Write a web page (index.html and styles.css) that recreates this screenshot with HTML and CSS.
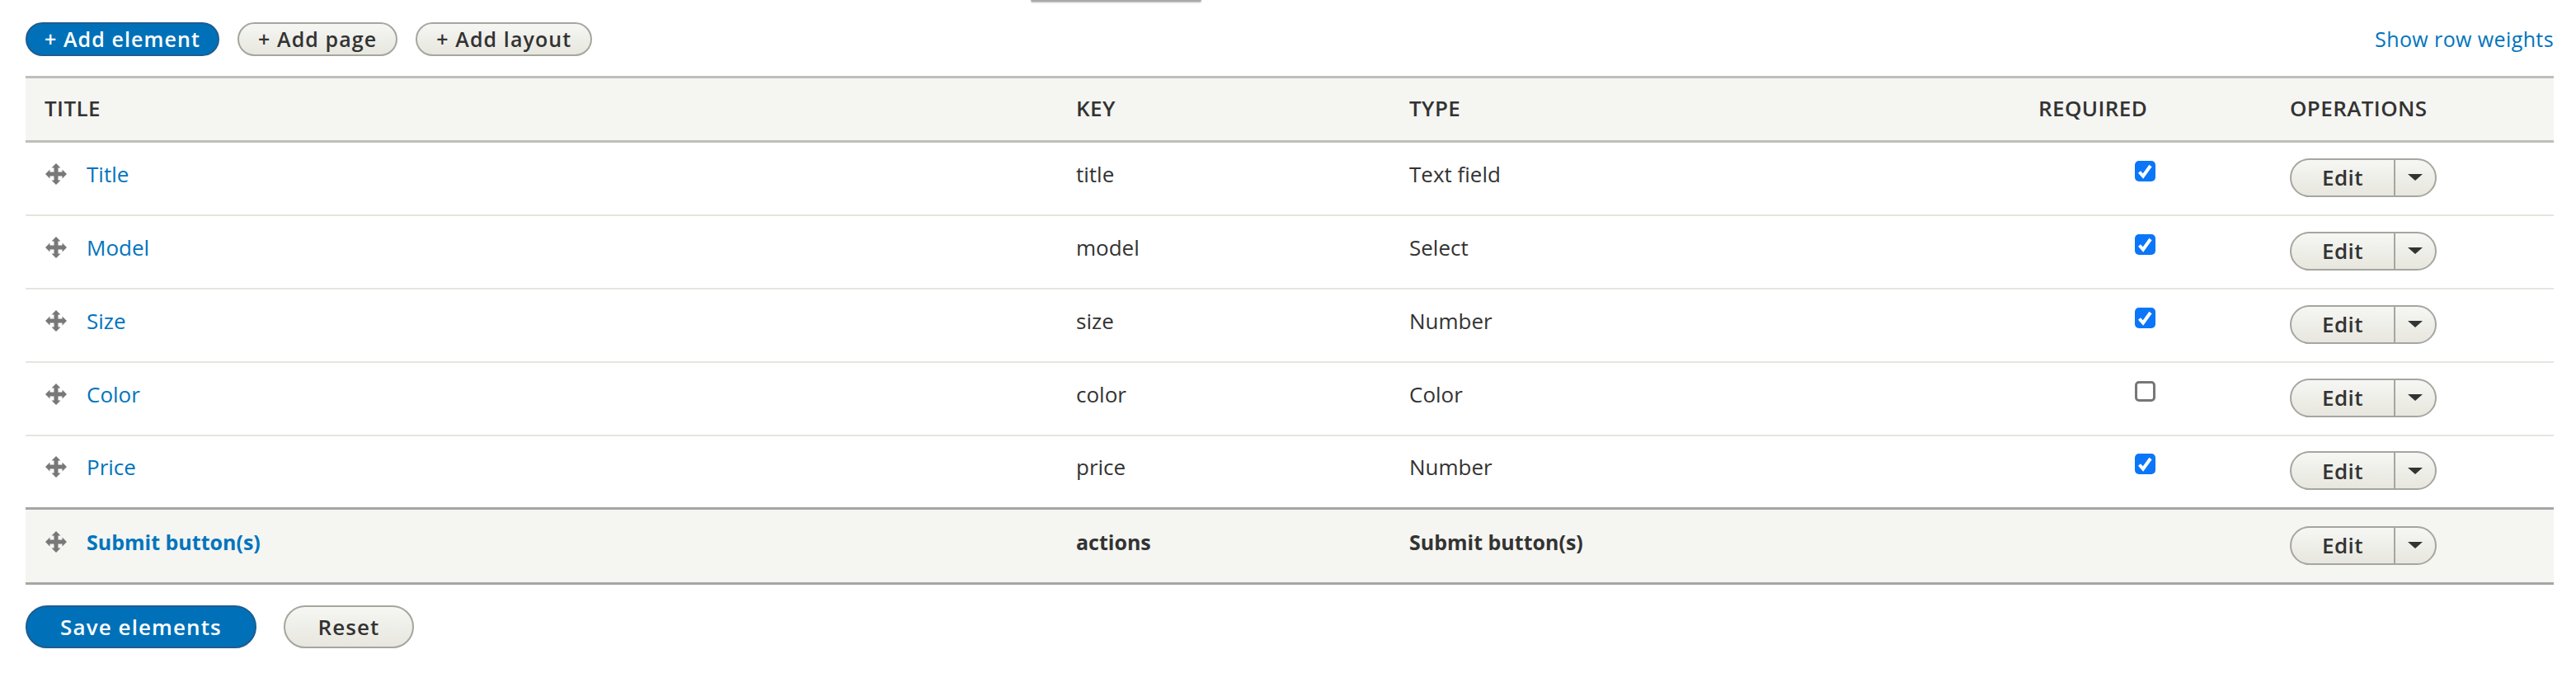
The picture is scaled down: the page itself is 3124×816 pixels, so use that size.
FILE: index.html
```html
<!DOCTYPE html>
<html>
<head>
    <title>Manage elements</title>
    <link rel="stylesheet" href="styles.css">
</head>
<body>
    <div class="clipped-tab"></div>

    <div class="toolbar">
        <div class="actions">
            <a class="button small primary">+ Add element</a>
            <a class="button small">+ Add page</a>
            <a class="button small">+ Add layout</a>
        </div>
        <a class="link weights">Show row weights</a>
    </div>

    <table class="elements">
        <colgroup>
            <col class="col-title">
            <col class="col-key">
            <col class="col-type">
            <col class="col-required">
            <col>
        </colgroup>
        <thead>
            <tr>
                <th>Title</th>
                <th>Key</th>
                <th>Type</th>
                <th>Required</th>
                <th>Operations</th>
            </tr>
        </thead>
        <tbody>
            <tr>
                <td><div class="title-cell"><svg class="handle" viewBox="0 0 28 28"><path d="M14 1l5.5 5.5h-3v5h5v-3l5.5 5.5-5.5 5.5v-3h-5v5h3L14 27l-5.5-5.5h3v-5h-5v3L1 14l5.5-5.5v3h5v-5h-3z"/></svg><a class="link">Title</a></div></td>
                <td>title</td>
                <td>Text field</td>
                <td class="required"><span class="check on"><svg viewBox="0 0 25 25"><path d="M5.5 13.5l4.5 5L19 6"/></svg></span></td>
                <td class="ops"><div class="dropbutton"><span class="drop-main">Edit</span><span class="drop-toggle"><span class="caret"></span></span></div></td>
            </tr>
            <tr>
                <td><div class="title-cell"><svg class="handle" viewBox="0 0 28 28"><path d="M14 1l5.5 5.5h-3v5h5v-3l5.5 5.5-5.5 5.5v-3h-5v5h3L14 27l-5.5-5.5h3v-5h-5v3L1 14l5.5-5.5v3h5v-5h-3z"/></svg><a class="link">Model</a></div></td>
                <td>model</td>
                <td>Select</td>
                <td class="required"><span class="check on"><svg viewBox="0 0 25 25"><path d="M5.5 13.5l4.5 5L19 6"/></svg></span></td>
                <td class="ops"><div class="dropbutton"><span class="drop-main">Edit</span><span class="drop-toggle"><span class="caret"></span></span></div></td>
            </tr>
            <tr>
                <td><div class="title-cell"><svg class="handle" viewBox="0 0 28 28"><path d="M14 1l5.5 5.5h-3v5h5v-3l5.5 5.5-5.5 5.5v-3h-5v5h3L14 27l-5.5-5.5h3v-5h-5v3L1 14l5.5-5.5v3h5v-5h-3z"/></svg><a class="link">Size</a></div></td>
                <td>size</td>
                <td>Number</td>
                <td class="required"><span class="check on"><svg viewBox="0 0 25 25"><path d="M5.5 13.5l4.5 5L19 6"/></svg></span></td>
                <td class="ops"><div class="dropbutton"><span class="drop-main">Edit</span><span class="drop-toggle"><span class="caret"></span></span></div></td>
            </tr>
            <tr>
                <td><div class="title-cell"><svg class="handle" viewBox="0 0 28 28"><path d="M14 1l5.5 5.5h-3v5h5v-3l5.5 5.5-5.5 5.5v-3h-5v5h3L14 27l-5.5-5.5h3v-5h-5v3L1 14l5.5-5.5v3h5v-5h-3z"/></svg><a class="link">Color</a></div></td>
                <td>color</td>
                <td>Color</td>
                <td class="required"><span class="check"></span></td>
                <td class="ops"><div class="dropbutton"><span class="drop-main">Edit</span><span class="drop-toggle"><span class="caret"></span></span></div></td>
            </tr>
            <tr>
                <td><div class="title-cell"><svg class="handle" viewBox="0 0 28 28"><path d="M14 1l5.5 5.5h-3v5h5v-3l5.5 5.5-5.5 5.5v-3h-5v5h3L14 27l-5.5-5.5h3v-5h-5v3L1 14l5.5-5.5v3h5v-5h-3z"/></svg><a class="link">Price</a></div></td>
                <td>price</td>
                <td>Number</td>
                <td class="required"><span class="check on"><svg viewBox="0 0 25 25"><path d="M5.5 13.5l4.5 5L19 6"/></svg></span></td>
                <td class="ops"><div class="dropbutton"><span class="drop-main">Edit</span><span class="drop-toggle"><span class="caret"></span></span></div></td>
            </tr>
            <tr class="submit-row">
                <td><div class="title-cell"><svg class="handle" viewBox="0 0 28 28"><path d="M14 1l5.5 5.5h-3v5h5v-3l5.5 5.5-5.5 5.5v-3h-5v5h3L14 27l-5.5-5.5h3v-5h-5v3L1 14l5.5-5.5v3h5v-5h-3z"/></svg><a class="link">Submit button(s)</a></div></td>
                <td>actions</td>
                <td>Submit button(s)</td>
                <td></td>
                <td class="ops"><div class="dropbutton"><span class="drop-main">Edit</span><span class="drop-toggle"><span class="caret"></span></span></div></td>
            </tr>
        </tbody>
    </table>

    <div class="form-actions">
        <a class="button primary save">Save elements</a>
        <a class="button reset">Reset</a>
    </div>
</body>
</html>
```

FILE: styles.css
```css
* {
    box-sizing: border-box;
}

html, body {
    height: 816px;
    overflow: hidden;
}

body {
    margin: 0;
    padding: 0 27px 0 31px;
    background: white;
    color: #333;
    font-family: 'Open Sans', sans-serif;
    font-size: 26px;
}

.clipped-tab {
    width: 207px;
    height: 2px;
    margin-left: 1219px;
    background: #aaa;
    border-radius: 0 0 8px 8px;
    box-shadow: 0 1px 2px rgba(0,0,0,0.3);
}

.toolbar {
    display: flex;
    justify-content: space-between;
    align-items: center;
    height: 41px;
    margin-top: 25px;
}

.actions {
    display: flex;
    gap: 22px;
}

.link {
    color: #0074bd;
}

.weights {
    font-size: 25px;
    letter-spacing: 0.4px;
    padding-bottom: 2px;
}

.button {
    display: flex;
    align-items: center;
    justify-content: center;
    border: 2px solid #a6a6a0;
    border-radius: 40px;
    background: linear-gradient(#f6f6f3, #e7e7df);
    color: #333;
    font-weight: 600;
    letter-spacing: 1.1px;
}

.button.small {
    height: 41px;
    padding: 0 23px 2px;
    font-size: 25px;
}

.button.small.primary {
    padding: 0 21px 2px;
}

.button.primary {
    border-color: #1e5c90;
    background: #0071b8;
    color: white;
}

.elements {
    width: 100%;
    margin-top: 24px;
    border-collapse: collapse;
    table-layout: fixed;
}

.col-title {
    width: 1251px;
}

.col-key {
    width: 404px;
}

.col-type {
    width: 763px;
}

.col-required {
    width: 305px;
}

th {
    height: 78px;
    padding: 0 23px 3px;
    border-top: 3px solid #bfbfba;
    border-bottom: 3px solid #bfbfba;
    background: #f5f5f2;
    font-weight: 600;
    letter-spacing: 0.4px;
    text-align: left;
    text-transform: uppercase;
}

td {
    height: 89px;
    padding: 0 23px 11px;
    border-bottom: 2px solid #e6e4df;
}

.title-cell {
    display: flex;
    align-items: center;
    gap: 23px;
}

.handle {
    width: 28px;
    height: 28px;
    fill: #787878;
}

td.required {
    padding: 0 0 18px 140px;
}

td.ops {
    padding-bottom: 2px;
}

.check {
    display: block;
    width: 25px;
    height: 25px;
    border: 3px solid #777;
    border-radius: 5px;
    background: white;
}

.check.on {
    border: none;
    background: #0b76f7;
}

.check svg {
    display: block;
    fill: none;
    stroke: white;
    stroke-width: 4;
}

.dropbutton {
    display: flex;
    width: 178px;
    height: 47px;
    border: 2px solid #a6a6a0;
    border-radius: 24px;
    background: linear-gradient(#f6f6f3, #e7e7df);
}

.drop-main {
    display: flex;
    align-items: center;
    justify-content: center;
    width: 126px;
    border-right: 2px solid #a6a6a0;
    font-weight: 600;
    letter-spacing: 0.5px;
}

.drop-toggle {
    display: flex;
    flex: 1;
    align-items: center;
    justify-content: center;
}

.caret {
    border-top: 8px solid #333;
    border-left: 9px solid transparent;
    border-right: 9px solid transparent;
}

.submit-row td {
    height: 91px;
    border-top: 3px solid #a6a6a6;
    border-bottom: 3px solid #a6a6a6;
    background: #f5f5f2;
    font-size: 25px;
    font-weight: 700;
}

.submit-row .drop-main {
    font-size: 26px;
    font-weight: 600;
}

.form-actions {
    display: flex;
    gap: 33px;
    margin-top: 25px;
}

.form-actions .button {
    height: 52px;
    font-size: 26px;
    letter-spacing: 1.1px;
}

.save {
    width: 280px;
}

.reset {
    width: 158px;
}
```
